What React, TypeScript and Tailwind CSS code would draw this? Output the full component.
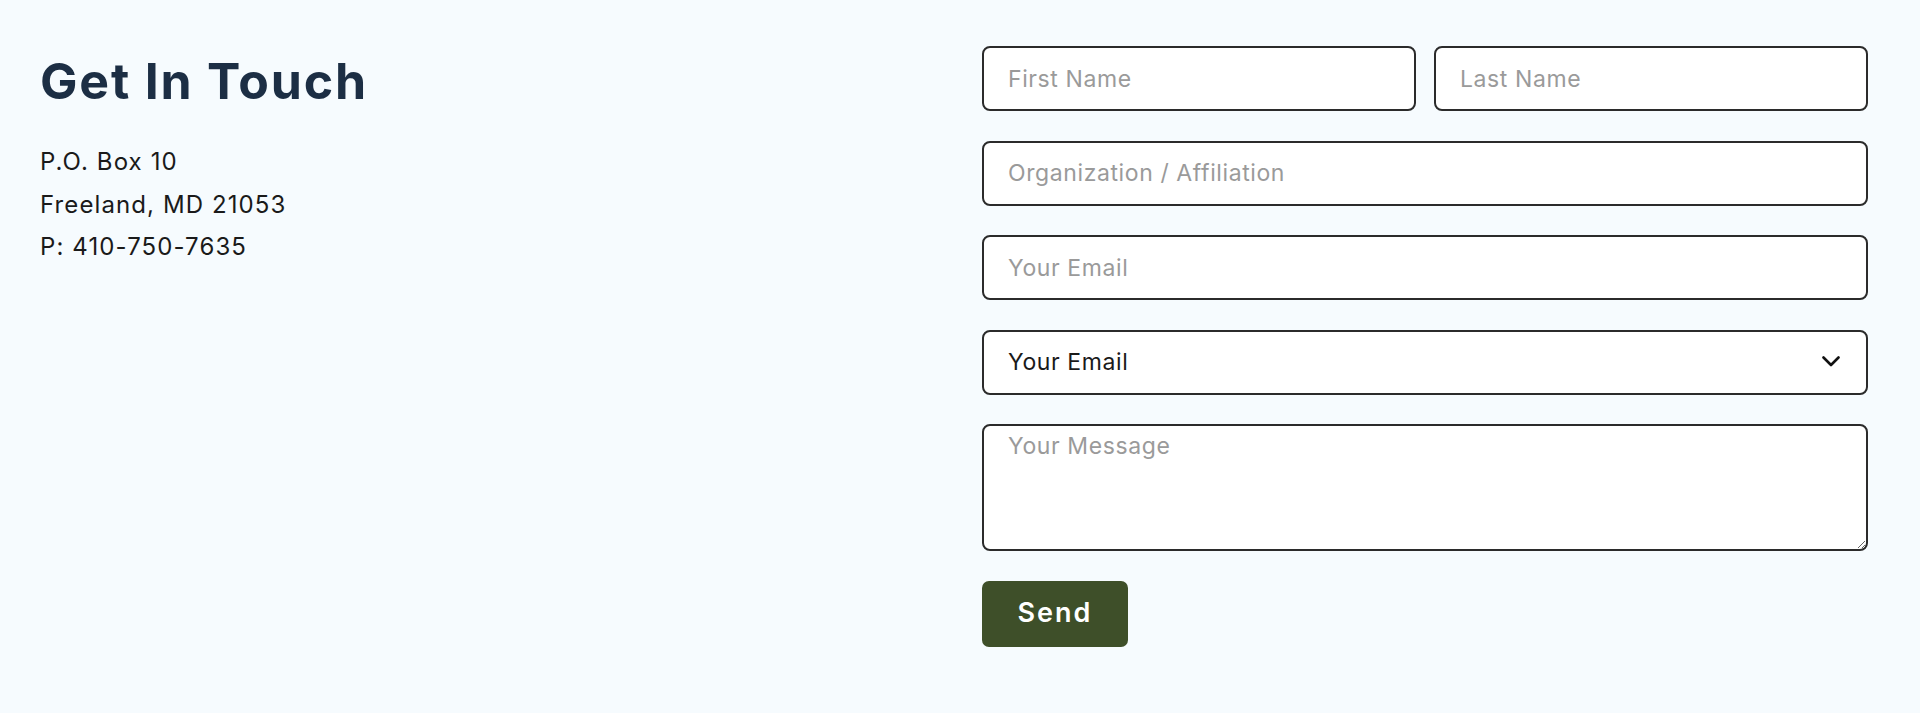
import React from "react";

const font = { fontFamily: "Inter, 'Noto Sans', sans-serif" };

const field =
  "h-[65px] bg-white border-2 border-[#2b2b2b] rounded-[8px] px-6 text-[23px] tracking-[0.6px] text-[#222] placeholder:text-[#9a9a9a] outline-none";

export default function App() {
  return (
    <div
      className="min-h-[713px] w-full bg-[#f6fbfe] flex pl-[40px] pr-[52px] pt-[46px]"
      style={font}
    >
      <div className="flex-1 pt-[5px]">
        <h1 className="text-[50px] leading-[60px] font-bold text-[#1c2e44] tracking-[1.8px]">
          Get In Touch
        </h1>
        <div className="mt-[30px] text-[24px] leading-[42.7px] text-[#1a1a1a] tracking-[1.1px]">
          <p>P.O. Box 10</p>
          <p>Freeland, MD 21053</p>
          <p>P: 410-750-7635</p>
        </div>
      </div>
      <form className="w-[886px] flex flex-col gap-[29.5px]" onSubmit={(e) => e.preventDefault()}>
        <div className="flex gap-[18px]">
          <input placeholder="First Name" className={"flex-1 min-w-0 " + field} />
          <input placeholder="Last Name" className={"flex-1 min-w-0 " + field} />
        </div>
        <input placeholder="Organization / Affiliation" className={field} />
        <input placeholder="Your Email" className={field} />
        <div className="relative">
          <select
            defaultValue="email"
            className="w-full h-[65px] appearance-none bg-white border-2 border-[#2b2b2b] rounded-[8px] px-6 text-[23px] tracking-[0.6px] text-[#1a1a1a] outline-none"
          >
            <option value="email">Your Email</option>
          </select>
          <svg
            className="absolute right-[28px] top-[26px] pointer-events-none"
            width="18"
            height="11"
            viewBox="0 0 18 11"
            fill="none"
          >
            <path d="M1.5 1.5 L9 9 L16.5 1.5" stroke="#111" strokeWidth="2.6" strokeLinecap="round" strokeLinejoin="round" />
          </svg>
        </div>
        <textarea
          placeholder="Your Message"
          className="h-[127px] bg-white border-2 border-[#2b2b2b] rounded-[8px] px-6 pt-[6px] text-[23px] leading-[28px] tracking-[0.6px] text-[#222] placeholder:text-[#9a9a9a] outline-none"
        />
        <div>
          <button
            type="submit"
            className="w-[146px] h-[66px] rounded-[7px] bg-[#3e4f29] text-white text-[27px] font-semibold tracking-[2px] flex items-center justify-center"
          >
            Send
          </button>
        </div>
      </form>
    </div>
  );
}
